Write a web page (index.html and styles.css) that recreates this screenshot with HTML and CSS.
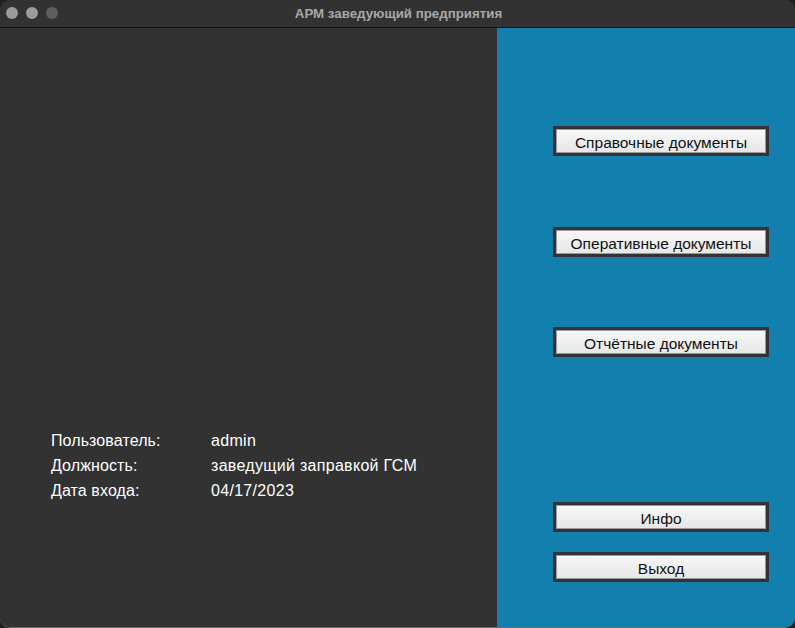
FILE: index.html
```html
<!DOCTYPE html>
<html lang="ru">
<head>
<meta charset="utf-8">
<title>АРМ заведующий предприятия</title>
<link rel="stylesheet" href="styles.css">
</head>
<body>
<div class="window">
  <div class="titlebar">
    <div class="lights">
      <span class="light"></span>
      <span class="light"></span>
      <span class="light dim"></span>
    </div>
    <div class="title">АРМ заведующий предприятия</div>
  </div>
  <div class="content">
    <div class="left">
      <div class="info">
        <div class="row"><span class="label">Пользователь:</span><span class="value">admin</span></div>
        <div class="row"><span class="label">Должность:</span><span class="value">заведущий заправкой ГСМ</span></div>
        <div class="row"><span class="label">Дата входа:</span><span class="value">04/17/2023</span></div>
      </div>
    </div>
    <div class="right">
      <button class="btn b1">Справочные документы</button>
      <button class="btn b2">Оперативные документы</button>
      <button class="btn b3">Отчётные документы</button>
      <button class="btn b4">Инфо</button>
      <button class="btn b5">Выход</button>
    </div>
  </div>
</div>
</body>
</html>
```

FILE: styles.css
```css
html, body {
  margin: 0;
  padding: 0;
  background: #1e1e1e;
}
body {
  width: 795px;
  height: 628px;
  overflow: hidden;
  font-family: "Liberation Sans", Arial, sans-serif;
}
.window {
  width: 795px;
  height: 628px;
  border-radius: 10px;
  overflow: hidden;
  background: #323232;
  display: flex;
  flex-direction: column;
  box-sizing: border-box;
  border-bottom: 1px solid #6a6a6a;
}
.titlebar {
  height: 27px;
  flex: 0 0 27px;
  background: #323232;
  border-bottom: 1px solid #121212;
  position: relative;
  display: flex;
  align-items: center;
  justify-content: center;
}
.lights {
  position: absolute;
  left: 6px;
  top: 7px;
  display: flex;
  gap: 8px;
}
.light {
  width: 12px;
  height: 12px;
  border-radius: 50%;
  background: #9c9c9c;
}
.light.dim {
  background: #5e5e5e;
}
.title {
  color: #a8a8a8;
  font-weight: bold;
  font-size: 13.3px;
  padding-left: 2px;
}
.content {
  flex: 1;
  display: flex;
}
.left {
  width: 497px;
  background: #323232;
  box-sizing: border-box;
  padding: 400px 0 0 51px;
}
.row {
  display: flex;
  height: 25px;
  line-height: 25px;
  color: #ffffff;
  font-size: 16px;
}
.label {
  width: 160px;
  letter-spacing: 0.1px;
}
.value {
  letter-spacing: 0.3px;
}
.right {
  flex: 1;
  background: #137fae;
  display: flex;
  flex-direction: column;
  align-items: flex-start;
  padding: 98px 0 0 56px;
  box-sizing: border-box;
}
.btn {
  width: 216px;
  height: 30px;
  margin: 0;
  padding: 3px 0 0 0;
  box-sizing: border-box;
  border: 3px solid #333333;
  background: linear-gradient(#f8f8f8, #e6e6e6);
  box-shadow: inset 0 0 0 1px #9a9a9a;
  font-family: "Liberation Sans", Arial, sans-serif;
  font-size: 15.5px;
  color: #111111;
  text-align: center;
  line-height: 20px;
}
.b2 { margin-top: 71px; }
.b3 { margin-top: 70px; }
.b4 { margin-top: 145px; }
.b5 { margin-top: 20px; }
```
